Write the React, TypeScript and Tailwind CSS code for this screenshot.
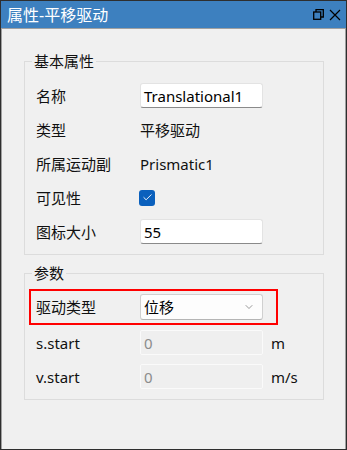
import { Check, ChevronDown } from 'lucide-react';

const font = { fontFamily: '"Noto Sans", "Noto Sans CJK SC", sans-serif' };

function TextBox({ value }: { value: string }) {
  return (
    <div className="w-[123px] h-[25px] bg-white border border-[#e3e3e3] border-b-[#8a8a8a] rounded-[3px] flex items-center pl-[3px] text-black">
      {value}
    </div>
  );
}

function DisabledBox({ value }: { value: string }) {
  return (
    <div className="w-[123px] h-[25px] bg-[#efefef] border border-[#fafafa] rounded-[2px] flex items-center pl-[3px] text-[#8c8c8c]">
      {value}
    </div>
  );
}

function Row({ label, children }: { label: string; children: React.ReactNode }) {
  return (
    <div className="h-[25px] flex items-center pl-[11px]">
      <div className="w-[104px] shrink-0">{label}</div>
      {children}
    </div>
  );
}

export default function App() {
  return (
    <div
      className="w-[347px] h-[450px] border border-[#2e2e2e] flex flex-col text-[15px] leading-[20px] text-[#111]"
      style={font}
    >
      {/* 标题栏 */}
      <div className="h-[27px] shrink-0 bg-[#3d80bf] flex items-center pl-[6px] pr-[5px] text-white text-[16px]">
        <span className="flex-1">属性-平移驱动</span>
        <svg width="11" height="11" viewBox="0 0 11 11" className="mr-[5px]" fill="none" stroke="black" strokeWidth="1.3">
          <rect x="0.7" y="3" width="7" height="7.3" />
          <path d="M3 3V0.7h7.3V8H8" />
        </svg>
        <svg width="12" height="12" viewBox="0 0 12 12" fill="none" stroke="black" strokeWidth="1.2">
          <path d="M1 1L11 11M11 1L1 11" />
        </svg>
      </div>

      <div className="flex-1 bg-[#f0f0f0] border border-[#a0a0a0] border-b-0 pt-[22px] px-[22px]">
        {/* 基本属性 */}
        <fieldset className="border border-[#dcdcdc] w-[300px] pb-[10px]">
          <legend className="ml-[7px] px-[2px] h-[20px]">基本属性</legend>
          <div className="flex flex-col gap-[9px] mt-[12px]">
            <Row label="名称">
              <TextBox value="Translational1" />
            </Row>
            <Row label="类型">
              <span>平移驱动</span>
            </Row>
            <Row label="所属运动副">
              <span>Prismatic1</span>
            </Row>
            <Row label="可见性">
              <div className="w-[16px] h-[16px] rounded-[3px] bg-[#0a60bd] flex items-center justify-center -ml-[1px]">
                <Check size={11} color="white" strokeWidth={2} />
              </div>
            </Row>
            <Row label="图标大小">
              <TextBox value="55" />
            </Row>
          </div>
        </fieldset>

        {/* 参数 */}
        <fieldset className="border border-[#dcdcdc] w-[300px] pb-[10px] mt-[8px]">
          <legend className="ml-[7px] px-[2px] h-[20px]">参数</legend>
          <div className="flex flex-col mt-[6px]">
            <div className="ml-[4px] w-[249px] h-[36px] border-2 border-[#ff0000] flex items-center pl-[5px]">
              <div className="w-[104px] shrink-0">驱动类型</div>
              <div className="w-[123px] h-[26px] bg-[#fdfdfd] border border-[#d0d0d0] border-b-[#b5b5b5] rounded-[3px] flex items-center pl-[3px] pr-[7px] text-black">
                <span className="flex-1">位移</span>
                <ChevronDown size={12} color="#555" strokeWidth={1.2} />
              </div>
            </div>
            <div className="flex flex-col gap-[9px] mt-[5px]">
              <Row label="s.start">
                <DisabledBox value="0" />
                <span className="ml-[8px]">m</span>
              </Row>
              <Row label="v.start">
                <DisabledBox value="0" />
                <span className="ml-[8px]">m/s</span>
              </Row>
            </div>
          </div>
        </fieldset>
      </div>
    </div>
  );
}
